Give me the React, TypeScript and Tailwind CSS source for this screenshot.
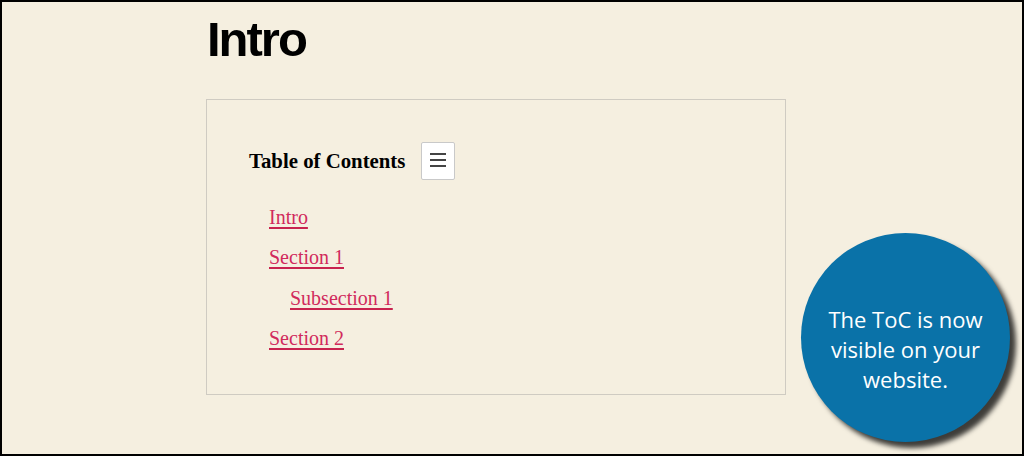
import React from 'react';

const links = [
  { label: 'Intro', sub: false },
  { label: 'Section 1', sub: false },
  { label: 'Subsection 1', sub: true },
  { label: 'Section 2', sub: false },
];

const App: React.FC = () => {
  return (
    <div className="relative w-[1024px] h-[456px] overflow-hidden border-2 border-black bg-[#f5efe0]">
      <div className="pl-[204px] pt-[8px]">
        {/* Page title */}
        <h1 className="ml-[1px] text-[49px] leading-[58px] font-bold tracking-[-2px] text-black font-['Liberation_Sans',Arial,sans-serif]">
          Intro
        </h1>

        {/* ToC box */}
        <div className="mt-[31px] w-[580px] h-[296px] border border-[#cfcbc2] pl-[42px] pt-[42px] font-['Liberation_Serif','Times_New_Roman',serif]">
          <div className="flex items-center gap-[16px]">
            <span className="text-[20.8px] leading-[24px] font-bold text-black">Table of Contents</span>
            <button className="flex h-[38px] w-[34px] flex-col items-center justify-start gap-[4px] rounded-[2px] border border-[#c9c9c9] bg-white pt-[10px]">
              <span className="block h-[2px] w-[16px] shrink-0 bg-[#444]" />
              <span className="block h-[2px] w-[16px] shrink-0 bg-[#444]" />
              <span className="block h-[2px] w-[16px] shrink-0 bg-[#444]" />
            </button>
          </div>

          <ul className="mt-[17px] pl-[20px]">
            {links.map((l) => (
              <li key={l.label} className={`text-[20px] leading-[40.3px] ${l.sub ? 'pl-[21px]' : ''}`}>
                <a
                  href="#"
                  className="text-[#d12a5c] underline decoration-2 underline-offset-[3px] decoration-[#c8234f]"
                >
                  {l.label}
                </a>
              </li>
            ))}
          </ul>
        </div>
      </div>

      {/* Callout bubble */}
      <div className="absolute left-[799px] top-[231px] flex h-[209px] w-[209px] items-center justify-center rounded-full bg-[#0a72a8] pt-[22px] shadow-[6px_6px_5px_rgba(0,0,0,0.75)]">
        <p className="text-center text-[22px] leading-[30px] text-white font-['Open_Sans',sans-serif]">
          The ToC is now
          <br />
          visible on your
          <br />
          website.
        </p>
      </div>
    </div>
  );
};

export default App;
